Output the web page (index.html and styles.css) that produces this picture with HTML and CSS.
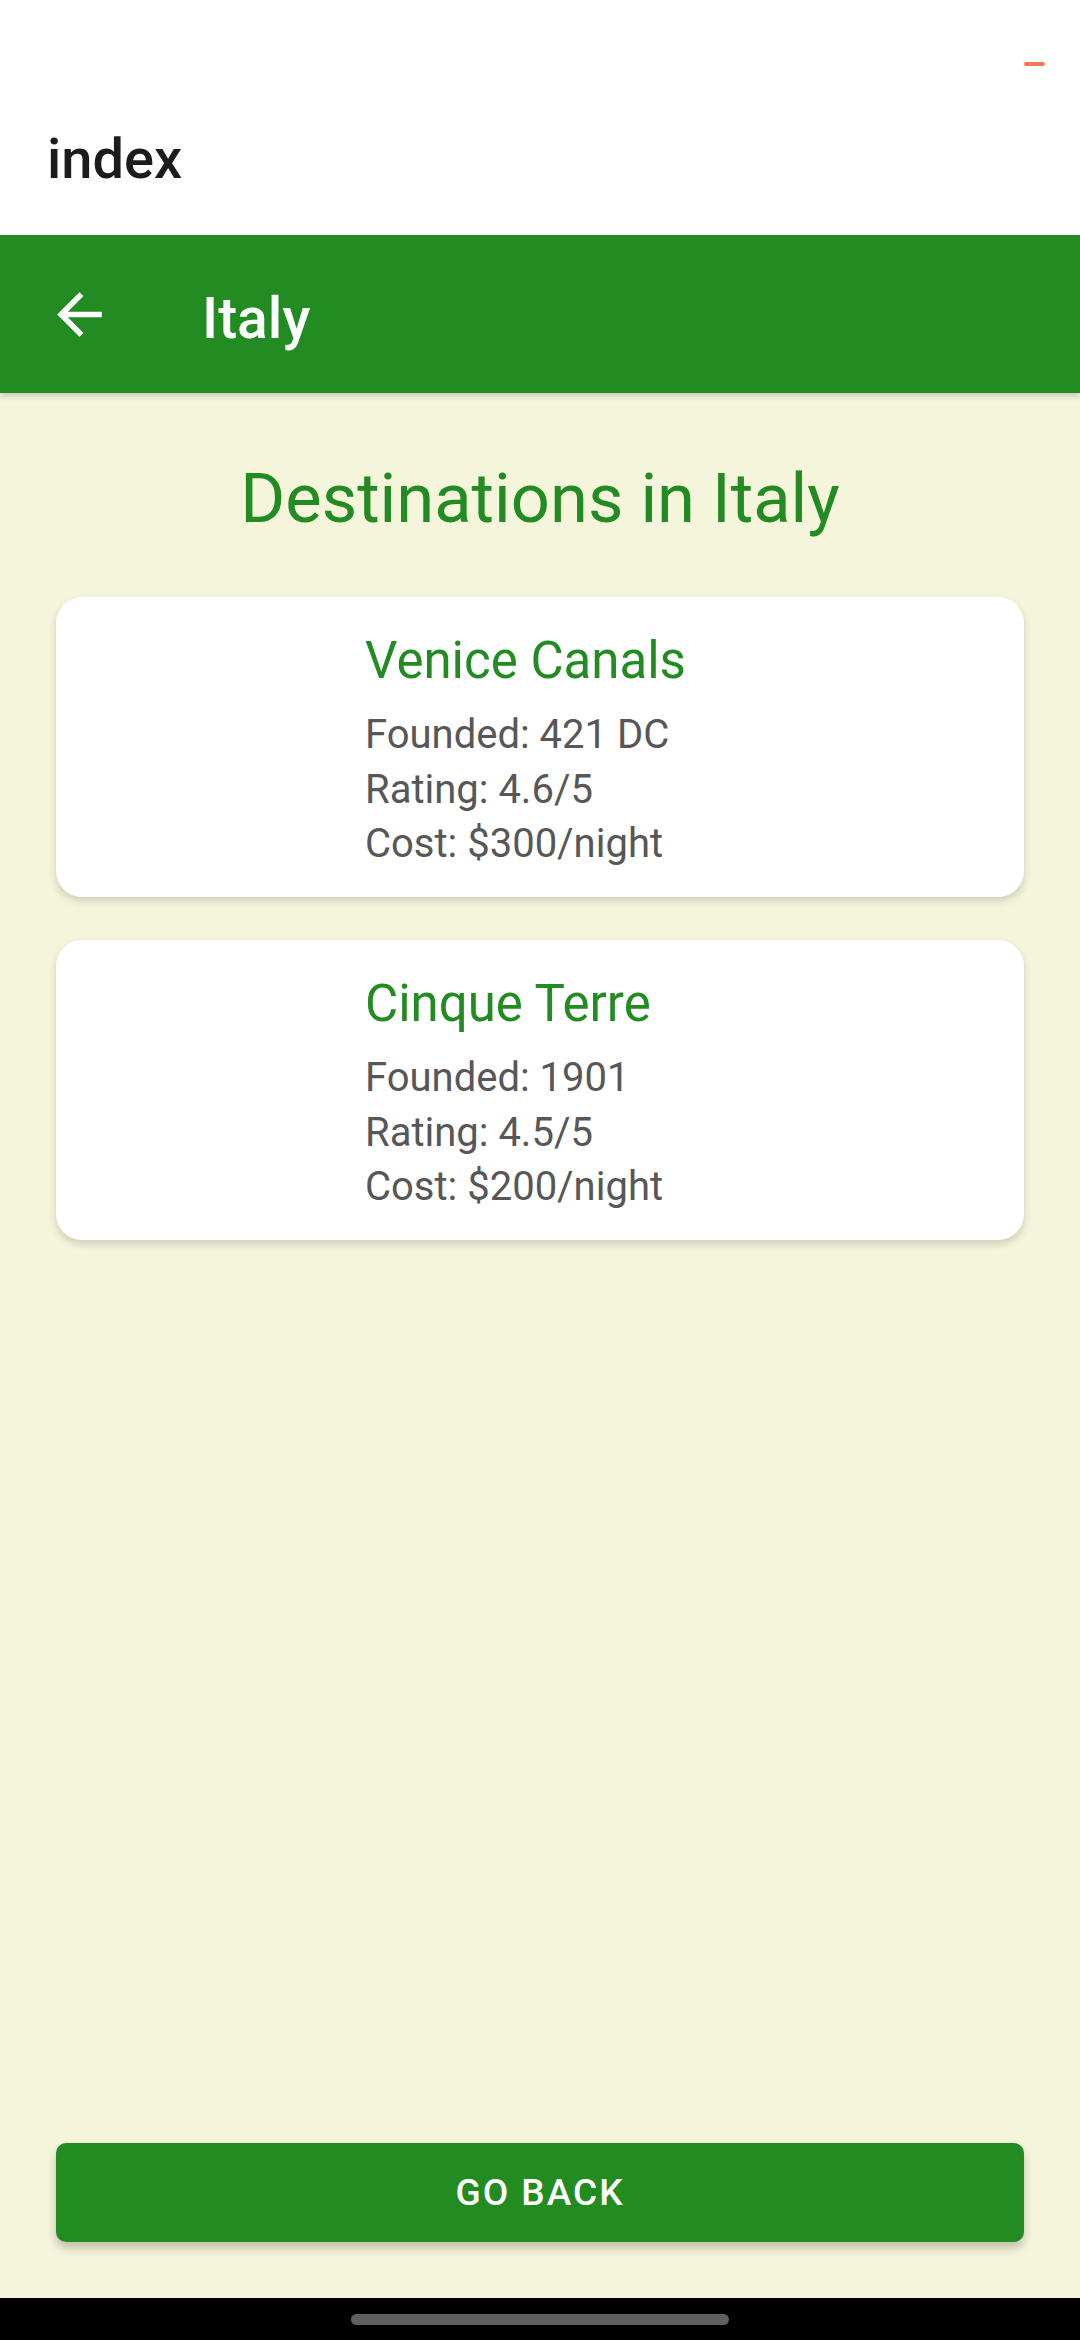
FILE: index.html
```html
<!DOCTYPE html>
<html>
<head>
<meta charset="utf-8">
<link rel="stylesheet" href="styles.css">
</head>
<body>
<div class="screen">
  <div class="topbar">
    <span class="top-title">index</span>
    <span class="status-dash"></span>
  </div>
  <div class="appbar">
    <svg class="back-icon" viewBox="0 0 24 24"><path d="M20 11H7.83l5.59-5.59L12 4l-8 8 8 8 1.41-1.41L7.83 13H20v-2z" fill="#ffffff"/></svg>
    <span class="appbar-title">Italy</span>
  </div>
  <main class="content">
    <h1 class="page-title">Destinations in Italy</h1>
    <div class="cards">
      <div class="card">
        <div class="card-title">Venice Canals</div>
        <div class="card-details">
          <div class="detail">Founded: 421 DC</div>
          <div class="detail">Rating: 4.6/5</div>
          <div class="detail">Cost: $300/night</div>
        </div>
      </div>
      <div class="card">
        <div class="card-title">Cinque Terre</div>
        <div class="card-details">
          <div class="detail">Founded: 1901</div>
          <div class="detail">Rating: 4.5/5</div>
          <div class="detail">Cost: $200/night</div>
        </div>
      </div>
    </div>
    <button class="go-back">GO BACK</button>
  </main>
  <div class="navbar"><span class="home-indicator"></span></div>
</div>
</body>
</html>
```
FILE: styles.css
```css
* { box-sizing: border-box; }
html, body {
  margin: 0;
  padding: 0;
  width: 1080px;
  height: 2340px;
  overflow: hidden;
  font-family: Roboto, "Noto Sans", "Liberation Sans", sans-serif;
}
.screen {
  width: 1080px;
  height: 2340px;
  display: flex;
  flex-direction: column;
  background: #f5f5dc;
}
.topbar {
  position: relative;
  height: 235px;
  flex: 0 0 235px;
  background: #ffffff;
  padding: 126px 0 0 47px;
}
.top-title {
  font-size: 56px;
  font-weight: 500;
  color: #1c1c1c;
  line-height: normal;
}
.status-dash {
  position: absolute;
  top: 62px;
  right: 35px;
  width: 21px;
  height: 4px;
  border-radius: 2px;
  background: #f47a52;
}
.appbar {
  position: relative;
  z-index: 2;
  height: 158px;
  flex: 0 0 158px;
  background: #228b22;
  display: flex;
  align-items: center;
  box-shadow: 0 3px 6px rgba(0, 0, 0, 0.18);
}
.back-icon {
  width: 67px;
  height: 67px;
  margin-left: 46px;
  flex: 0 0 67px;
}
.appbar-title {
  margin-left: 89px;
  padding-top: 8px;
  font-size: 57px;
  font-weight: 500;
  color: #ffffff;
  line-height: normal;
}
.content {
  flex: 1;
  display: flex;
  flex-direction: column;
  padding: 0 56px;
}
.page-title {
  margin: 65px 0 0 0;
  font-size: 68.7px;
  font-weight: 400;
  line-height: normal;
  color: #228b22;
  text-align: center;
}
.cards {
  margin-top: 58px;
  display: flex;
  flex-direction: column;
  gap: 43px;
  flex: 1;
}
.card {
  height: 300px;
  background: #ffffff;
  border-radius: 26px;
  padding: 34px 0 0 309px;
  box-shadow: 0 4px 8px rgba(0, 0, 0, 0.16);
}
.card-title {
  font-size: 51px;
  line-height: normal;
  color: #228b22;
}
.card-details {
  margin-top: 18px;
}
.detail {
  font-size: 40px;
  line-height: 54.5px;
  color: #575757;
}
.go-back {
  margin: 0 0 56px 0;
  height: 99px;
  border: none;
  border-radius: 10px;
  background: #228b22;
  color: #ffffff;
  font-family: Roboto, "Noto Sans", "Liberation Sans", sans-serif;
  font-size: 37px;
  font-weight: 500;
  letter-spacing: 2px;
  box-shadow: 0 6px 10px rgba(0, 0, 0, 0.22);
}
.navbar {
  height: 42px;
  flex: 0 0 42px;
  background: #000000;
  display: flex;
  justify-content: center;
  padding-top: 16px;
}
.home-indicator {
  width: 378px;
  height: 11px;
  border-radius: 6px;
  background: #5f5f5f;
}
```
